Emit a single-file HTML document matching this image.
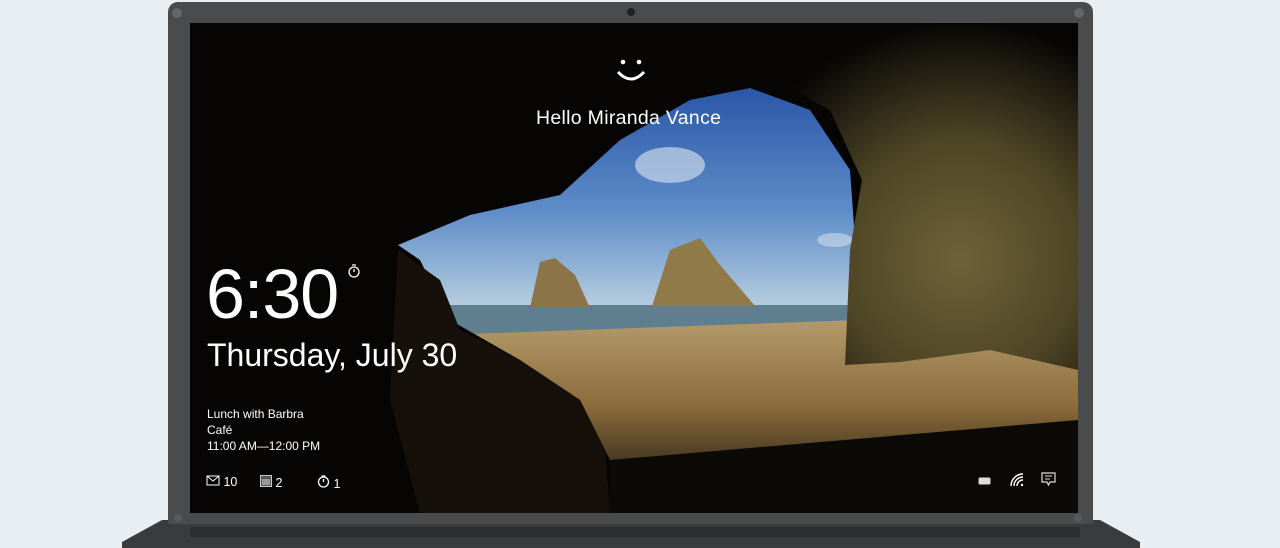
<!DOCTYPE html>
<html><head><style>
body{margin:0;width:1280px;height:548px;background:#e9eef3;overflow:hidden;position:relative;font-family:"Liberation Sans",sans-serif}
.base{position:absolute;left:122px;top:520px;width:1018px;height:28px;background:#3a3b3c;clip-path:polygon(40px 0,978px 0,1018px 22px,1018px 28px,0 28px,0 22px)}
.kb{position:absolute;left:190px;top:527px;width:890px;height:10px;background:#2c2d2e}
.bez{position:absolute;left:168px;top:2px;width:925px;height:522px;background:#4a4b4c;border-radius:10px 10px 0 0}
.scr{position:absolute;left:190px;top:23px;width:888px;height:490px;background:#000;overflow:hidden}
.t{position:absolute;color:#fff;white-space:nowrap}
</style></head><body>
<div class="base"></div><div class="kb"></div>
<div class="bez"></div>
<div style="position:absolute;left:172px;top:8px;width:10px;height:10px;border-radius:50%;background:#666"></div>
<div style="position:absolute;left:1074px;top:8px;width:10px;height:10px;border-radius:50%;background:#666"></div>
<div style="position:absolute;left:627px;top:8px;width:8px;height:8px;border-radius:50%;background:#222"></div>
<div class="scr">
<svg width="888" height="490" viewBox="190 23 888 490" style="position:absolute;left:0;top:0">
<defs>
<linearGradient id="sky" x1="0" y1="0" x2="0" y2="1"><stop offset="0" stop-color="#2a56a8"/><stop offset=".55" stop-color="#5d8cc8"/><stop offset="1" stop-color="#b9cfe0"/></linearGradient>
<linearGradient id="sand" x1="0" y1="0" x2="0" y2="1"><stop offset="0" stop-color="#b39a6a"/><stop offset=".6" stop-color="#8d6d3d"/><stop offset="1" stop-color="#4a3a22"/></linearGradient>
<radialGradient id="wall" cx="960" cy="260" r="240" gradientUnits="userSpaceOnUse"><stop offset="0" stop-color="#6e6238"/><stop offset=".5" stop-color="#4e4526"/><stop offset="1" stop-color="#060504"/></radialGradient>
</defs>
<rect x="190" y="23" width="888" height="490" fill="#060504"/>
<path d="M398 245 L470 215 L560 195 L620 140 L690 100 L750 88 L810 110 L850 170 L860 310 L400 310Z" fill="url(#sky)"/>
<ellipse cx="670" cy="165" rx="35" ry="18" fill="#e0e8f0" opacity=".6"/>
<ellipse cx="835" cy="240" rx="18" ry="7" fill="#e0e8f0" opacity=".5"/>
<rect x="440" y="305" width="420" height="32" fill="#5f7f90"/>
<path d="M530 308 L540 262 L555 258 L575 275 L590 308Z" fill="#8a7448"/>
<path d="M652 306 L670 250 L700 238 L720 265 L755 306Z" fill="#8f7a48"/>
<path d="M440 335 L860 320 L1078 360 L1078 430 L610 460 L600 440 L470 340Z" fill="url(#sand)"/>
<path d="M845 365 L850 250 L862 180 L830 110 L770 78 L700 82 L640 110 L640 23 L1078 23 L1078 370 L990 350 L900 362Z" fill="url(#wall)"/>
<path d="M190 23 L641 23 L641 110 L600 135 L560 170 L500 190 L440 210 L398 245 L420 260 L450 320 L520 360 L580 400 L605 450 L610 513 L190 513Z" fill="#060504"/>
<path d="M398 250 L440 280 L460 330 L520 360 L580 400 L605 450 L610 513 L420 513 L390 400Z" fill="#15110a"/>
<path d="M610 460 L1078 420 L1078 513 L610 513Z" fill="#0c0a06"/>
</svg>
<svg class="t" style="left:424px;top:30px" width="34" height="34" viewBox="0 0 34 34"><circle cx="9" cy="9" r="2.3" fill="#fff"/><circle cx="25" cy="9" r="2.3" fill="#fff"/><path d="M4 19 Q17 33 30 19" stroke="#fff" stroke-width="3" fill="none"/></svg>
<div class="t" style="left:346px;top:84px;font-size:19.5px;letter-spacing:.3px">Hello Miranda Vance</div>
<div class="t" style="left:16px;top:231px;font-size:70px;letter-spacing:-1px">6:30</div>
<svg class="t" style="left:156px;top:240px" width="16" height="16" viewBox="0 0 16 16"><circle cx="8" cy="9" r="5" stroke="#fff" stroke-width="1.3" fill="none"/><path d="M8 9V6M6 2h4" stroke="#fff" stroke-width="1.3"/></svg>
<div class="t" style="left:17px;top:314px;font-size:32px">Thursday, July 30</div>
<div class="t" style="left:17px;top:383px;font-size:12px;line-height:16px">Lunch with Barbra<br>Café<br>11:00 AM—12:00 PM</div>
<div class="t" style="left:16px;top:452px;font-size:12.5px">
<svg width="14" height="11" viewBox="0 0 14 11"><rect x="1" y="1" width="12" height="9" stroke="#fff" fill="none"/><path d="M1 1L7 6L13 1" stroke="#fff" fill="none"/></svg> 10</div>
<div class="t" style="left:70px;top:452px;font-size:12.5px"><svg width="12" height="12" viewBox="0 0 12 12"><rect x=".5" y=".5" width="11" height="11" stroke="#ccc" fill="#555"/><rect x="2" y="4" width="8" height="6" fill="#999"/></svg> 2</div>
<div class="t" style="left:127px;top:452px;font-size:12.5px"><svg width="13" height="13" viewBox="0 0 13 13"><circle cx="6.5" cy="7" r="5" stroke="#fff" stroke-width="1.3" fill="none"/><path d="M6.5 7V4M4.5 1h4" stroke="#fff" stroke-width="1.3"/></svg> 1</div>
<svg class="t" style="left:788px;top:454px" width="14" height="8"><rect x=".5" y=".5" width="12" height="7" rx="1.5" fill="#ddd"/></svg>
<svg class="t" style="left:820px;top:450px" width="14" height="14" viewBox="0 0 14 14"><path d="M1 13A12 12 0 0 1 13 1M4 13A9 9 0 0 1 13 4M7 13A6 6 0 0 1 13 7" stroke="#fff" stroke-width="1.4" fill="none"/><circle cx="12" cy="12" r="1.2" fill="#fff"/></svg>
<svg class="t" style="left:851px;top:449px" width="15" height="15" viewBox="0 0 15 15"><path d="M1 1H14V10H9L7.5 13L6 10H1Z" stroke="#ddd" fill="none" stroke-width="1.2"/><path d="M4 4H11M4 7H9" stroke="#ddd"/></svg>
</div>
<div style="position:absolute;left:1074px;top:514px;width:8px;height:8px;border-radius:50%;background:#5a5a5a"></div>
<div style="position:absolute;left:174px;top:514px;width:8px;height:8px;border-radius:50%;background:#5a5a5a"></div>
</body></html>
